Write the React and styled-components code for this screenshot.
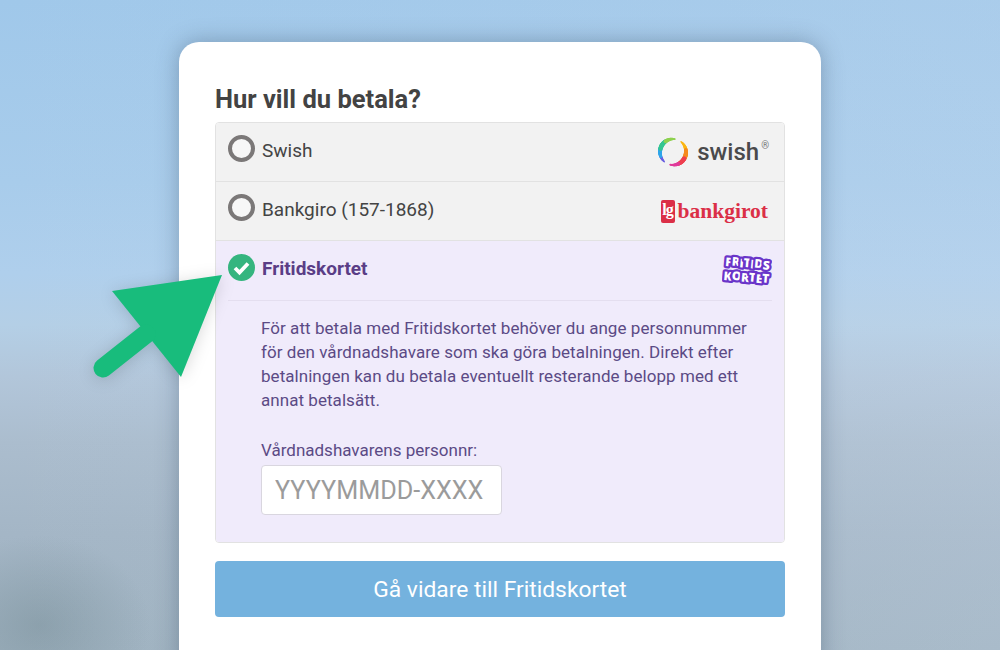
import React from 'react';
import styled, { createGlobalStyle } from 'styled-components';

const Global = createGlobalStyle`
  html, body { margin: 0; padding: 0; height: 100%; overflow: hidden; }
  body { font-family: Roboto, "Liberation Sans", sans-serif; }
`;

const Page = styled.div`
  position: relative;
  width: 1000px;
  height: 650px;
  overflow: hidden;
  display: flex;
  justify-content: center;
  padding-top: 42px;
  box-sizing: border-box;
  background:
    radial-gradient(ellipse 110px 90px at 40px 625px, rgba(120, 142, 152, 0.5), transparent),
    linear-gradient(90deg, rgba(170, 180, 190, 0) 0%, rgba(205, 220, 238, 0.22) 100%),
    linear-gradient(180deg, #a0c8ea 0%, #a8cceb 28%, #afcfec 42%, #b4cfe6 50%, #b2c6da 58%, #abbdce 68%, #a4b6c6 82%, #9fb2c0 100%);
`;

const Card = styled.main`
  width: 642px;
  height: 640px;
  box-sizing: border-box;
  padding: 41px 36px 0;
  background: #fff;
  border-radius: 20px;
  box-shadow: 0 0 22px rgba(50, 70, 95, 0.38);
`;

const Title = styled.h1`
  margin: 0 0 7px;
  font-size: 25.5px;
  line-height: 32px;
  font-weight: 700;
  color: #434343;
`;

const Options = styled.div`
  border: 1px solid #e2e2e2;
  border-radius: 4px;
  overflow: hidden;
`;

const Row = styled.div`
  height: 59px;
  box-sizing: border-box;
  display: flex;
  align-items: center;
  padding: 0 12px;
  background: #f2f2f2;
  border-bottom: 1px solid #e2e2e2;
`;

const Radio = styled.span`
  width: 27px;
  height: 27px;
  box-sizing: border-box;
  flex: none;
  border-radius: 50%;
  border: 4px solid #7b7878;
  background: #f7f7f7;
  margin-top: -7px;
`;

const Check = styled.svg`
  width: 27px;
  height: 27px;
  flex: none;
  margin-top: -7px;
`;

const Label = styled.span`
  margin: -4px 0 0 7px;
  font-size: 19px;
  color: ${(p) => (p.$active ? '#5a3d86' : '#444')};
  font-weight: ${(p) => (p.$active ? 700 : 400)};
`;

const Logo = styled.span`
  margin-left: auto;
  display: flex;
  align-items: center;
`;

const SwishText = styled.span`
  font-family: Roboto, sans-serif;
  font-weight: 500;
  font-size: 24px;
  color: #4a4a4c;
  margin-left: 8px;
`;

const Reg = styled.span`
  font-size: 10px;
  color: #777;
  margin: -14px 3px 0 2px;
`;

const BgMark = styled.span`
  width: 14px;
  height: 23px;
  border-radius: 2px;
  background: #db2f47;
  color: #fff;
  font-family: "Liberation Serif", serif;
  font-weight: 700;
  font-size: 16px;
  line-height: 19px;
  text-align: center;
  letter-spacing: -1px;
`;

const BgText = styled.span`
  font-family: "Liberation Serif", serif;
  font-weight: 700;
  font-size: 21.5px;
  color: #db2f47;
  margin-left: 3px;
  margin-right: 4px;
`;

const Panel = styled.section`
  background: #f0ebfb;
  padding: 0 12px 26px;
  height: 301px;
  box-sizing: border-box;
`;

const PanelHead = styled.div`
  height: 60px;
  box-sizing: border-box;
  display: flex;
  align-items: center;
  border-bottom: 1px solid #e4deef;
`;

const FritidsLogo = styled.svg`
  width: 50px;
  height: 34px;
  margin: -1px 0 0;
  font-family: "Open Sans", sans-serif;
  font-weight: 800;
`;

const PanelBody = styled.div`
  padding: 15px 0 0 33px;
  color: #5b4a85;
`;

const Text = styled.p`
  margin: 0 0 26px;
  width: 500px;
  font-size: 17px;
  letter-spacing: 0.05px;
  line-height: 24px;
`;

const FieldLabel = styled.label`
  display: block;
  font-size: 17px;
  line-height: 24px;
  margin-bottom: 3px;
`;

const Input = styled.input`
  display: block;
  width: 241px;
  height: 50px;
  box-sizing: border-box;
  border: 1px solid #d9d6df;
  border-radius: 4px;
  background: #fff;
  padding: 0 13px;
  font-family: Roboto, sans-serif;
  font-size: 25.2px;
  outline: none;
  &::placeholder { color: #9b9b9b; opacity: 1; }
`;

const Submit = styled.button`
  display: block;
  width: 570px;
  height: 56px;
  margin-top: 18px;
  border: 0;
  border-radius: 4px;
  background: #74b2de;
  color: #fff;
  font-family: Roboto, sans-serif;
  font-size: 22.8px;
`;

const Arrow = styled.svg`
  position: absolute;
  left: 0;
  top: 0;
  width: 300px;
  height: 400px;
  filter: drop-shadow(0 2px 8px rgba(0, 0, 0, 0.15));
`;

// colour stops along the two arcs of the swish ring, angles clockwise from 12 o'clock
const leftArc = [
  [222, '#6a5fe0'],
  [250, '#2fa4ea'],
  [285, '#35c690'],
  [325, '#8ed14f'],
  [368, '#efe034'],
];
const rightArc = [
  [38, '#fbb614'],
  [80, '#f58a1f'],
  [120, '#ee3f4f'],
  [155, '#e03a9a'],
  [192, '#8a4fd8'],
];

const point = (deg) => {
  const a = (deg * Math.PI) / 180;
  return [16 + 13 * Math.sin(a), 16 - 13 * Math.cos(a)];
};

const arcSegments = (stops) => {
  const first = stops[0][0];
  const last = stops[stops.length - 1][0];
  const out = [];
  stops.slice(0, -1).forEach(([from, color], i) => {
    const to = stops[i + 1][0];
    for (let d = from; d < to; d += 4) {
      const t = (d - first) / (last - first);
      const [x1, y1] = point(d);
      const [x2, y2] = point(Math.min(d + 5, to));
      out.push({ x1, y1, x2, y2, color, w: 1.4 + 3 * Math.sin(Math.PI * t) });
    }
  });
  return out;
};

const SwishRing = () => (
  <svg width="32" height="32" viewBox="0 0 32 32" fill="none" strokeLinecap="round">
    {[...arcSegments(leftArc), ...arcSegments(rightArc)].map((s, i) => (
      <line key={i} x1={s.x1} y1={s.y1} x2={s.x2} y2={s.y2} stroke={s.color} strokeWidth={s.w} />
    ))}
  </svg>
);

export default function App() {
  return (
    <Page>
      <Global />
      <Card>
        <Title>Hur vill du betala?</Title>
        <Options>
          <Row>
            <Radio />
            <Label>Swish</Label>
            <Logo>
              <SwishRing />
              <SwishText>swish</SwishText>
              <Reg>®</Reg>
            </Logo>
          </Row>
          <Row>
            <Radio />
            <Label>Bankgiro (157-1868)</Label>
            <Logo>
              <BgMark>lg</BgMark>
              <BgText>bankgirot</BgText>
            </Logo>
          </Row>
          <Panel>
            <PanelHead>
              <Check viewBox="0 0 27 27">
                <circle cx="13.5" cy="13.5" r="13.5" fill="#35b57f" />
                <path d="M7 14l4.5 4.5 8.5-9" fill="none" stroke="#fff" strokeWidth="3.8" />
              </Check>
              <Label $active>Fritidskortet</Label>
              <Logo>
                <FritidsLogo viewBox="0 0 50 34">
                  <g transform="rotate(5 25 17)" fill="#fff" stroke="#6a35c9" strokeWidth="4.6" strokeLinejoin="round" paintOrder="stroke" fontSize="12" textAnchor="middle" letterSpacing="-0.2">
                    <text x="25" y="15" dy="0 -1 1 -1 1 -1 1">FRITIDS</text>
                    <text x="25" y="28" dy="1 -1 1 -1 1 -1">KORTET</text>
                  </g>
                </FritidsLogo>
              </Logo>
            </PanelHead>
            <PanelBody>
              <Text>
                För att betala med Fritidskortet behöver du ange personnummer för den vårdnadshavare som ska göra
                betalningen. Direkt efter betalningen kan du betala eventuellt resterande belopp med ett annat
                betalsätt.
              </Text>
              <FieldLabel>Vårdnadshavarens personnr:</FieldLabel>
              <Input placeholder="YYYYMMDD-XXXX" />
            </PanelBody>
          </Panel>
        </Options>
        <Submit>Gå vidare till Fritidskortet</Submit>
      </Card>
      <Arrow viewBox="0 0 300 400">
        <path d="M222 275 L112 291 L181 377 Z" fill="#18bc7c" />
        <line x1="146" y1="334" x2="103" y2="368" stroke="#18bc7c" strokeWidth="19" strokeLinecap="round" />
      </Arrow>
    </Page>
  );
}
